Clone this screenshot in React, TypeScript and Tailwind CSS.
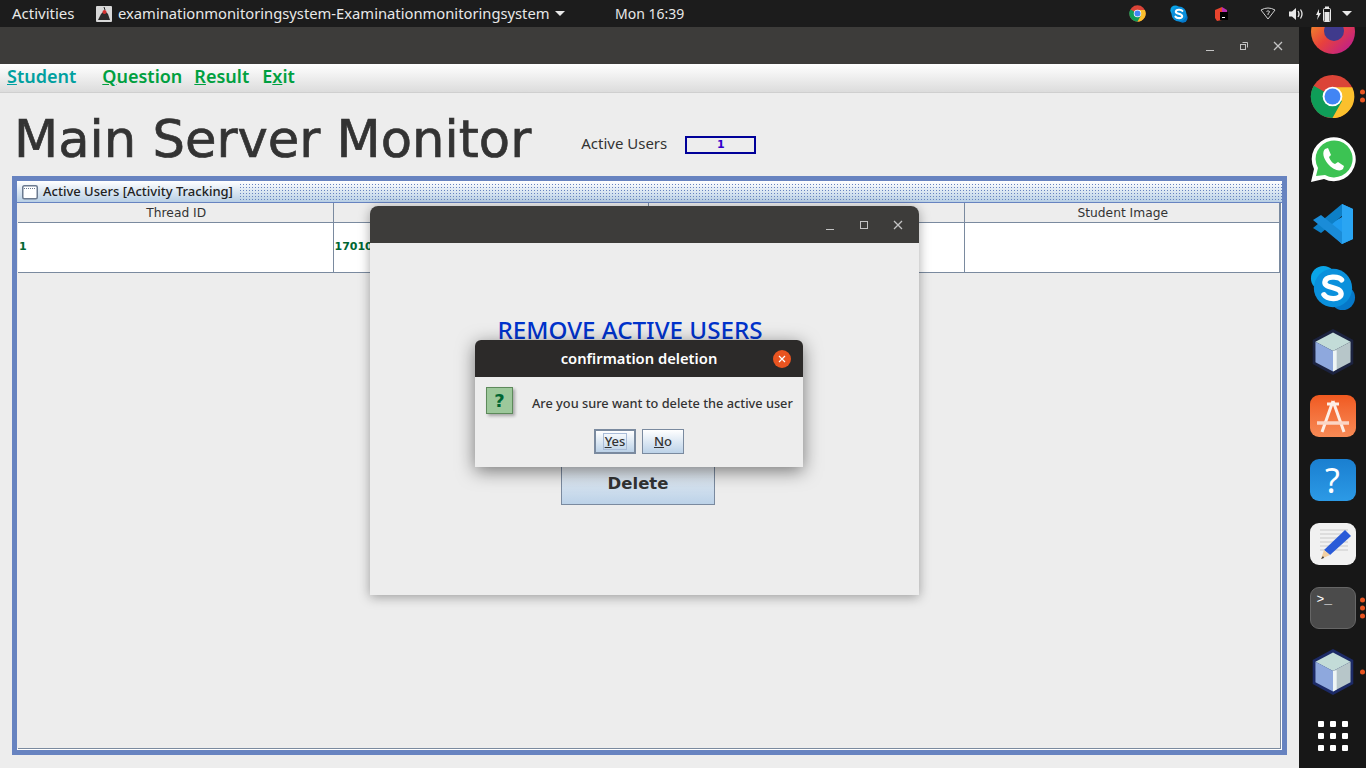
// Ubuntu desktop with the exam monitor window and its two dialogs
const uiFont = "font-['Noto_Sans','Open_Sans',sans-serif]";
const dejaVu = "font-['DejaVu_Sans',sans-serif]";

function ChromeIcon({ size }: { size: number }) {
  return (
    <svg width={size} height={size} viewBox="0 0 48 48">
      <circle cx="24" cy="24" r="23" fill="#db4437" />
      <path d="M24 24 L4 12.5 A23 23 0 0 0 24 47 L36 28z" fill="#0f9d58" />
      <path d="M24 14 H45 A23 23 0 0 1 24 47 L34 29z" fill="#fbc02d" />
      <circle cx="24" cy="24" r="10.5" fill="#fff" />
      <circle cx="24" cy="24" r="8.5" fill="#4285f4" />
    </svg>
  );
}

function SkypeIcon({ size }: { size: number }) {
  return (
    <svg width={size} height={size} viewBox="0 0 48 48">
      <circle cx="14" cy="14" r="13" fill="#0aa5e8" />
      <circle cx="34" cy="34" r="13" fill="#0678c9" />
      <circle cx="24" cy="24" r="20" fill="#0a90dc" />
      <path d="M33 15.5 C30 11.5 16 11 15.5 18 C15 25 32 22 32.500 30 C32.800 36.500 18 36.500 14.500 31" fill="none" stroke="#fff" strokeWidth="5.500" strokeLinecap="round" />
    </svg>
  );
}

function NetbeansIcon({ halo }: { halo: string }) {
  return (
    <svg width="48" height="48" viewBox="0 0 48 52">
      <path d="M24 1 L46 13 V39 L24 51 L2 39 V13z" fill={halo} />
      <path d="M24 5 L43 15 L24 25 L5 15z" fill="#c3dcd8" />
      <path d="M5 15 L24 25 V47 L5 37z" fill="#8ea8dd" />
      <path d="M43 15 L24 25 V47 L43 37z" fill="#b7c6c9" />
      <path d="M24 25 V47 L28 45 V24z" fill="#eef5f5" />
    </svg>
  );
}

function DockIcon({ children, dots = 0 }: { children: React.ReactNode; dots?: number }) {
  return (
    <div className="relative h-16 shrink-0 flex items-center justify-center">
      {children}
      {dots > 0 && (
        <div className="absolute right-[1px] top-1/2 -translate-y-1/2 flex flex-col gap-[3px]">
          {Array.from({ length: dots }).map((_, i) => (
            <span key={i} className="w-[5px] h-[5px] rounded-full bg-[#e95420]" />
          ))}
        </div>
      )}
    </div>
  );
}

function Dock() {
  return (
    <div className="w-[67px] shrink-0 bg-[#171717] flex flex-col justify-end overflow-hidden">
      <DockIcon>
        <svg width="44" height="44" viewBox="0 0 44 44">
          <defs>
            <linearGradient id="fox" x1="0" y1="0" x2="1" y2="1">
              <stop offset="0" stopColor="#f5a623" />
              <stop offset="0.5" stopColor="#e8413c" />
              <stop offset="1" stopColor="#b5179e" />
            </linearGradient>
          </defs>
          <circle cx="22" cy="22" r="22" fill="url(#fox)" />
          <circle cx="23" cy="21" r="10" fill="#3f3a8c" />
        </svg>
      </DockIcon>
      <DockIcon dots={2}>
        <ChromeIcon size={45} />
      </DockIcon>
      <DockIcon>
        <svg width="46" height="46" viewBox="0 0 46 46">
          <path d="M1 45 L4 32 A22 22 0 1 1 14 42z" fill="#fff" />
          <path d="M6 39 L8 31 A18.500 18.500 0 1 1 15 38z" fill="#3cc353" />
          <path d="M15 12 C12 15 13 21 18 27 C23 33 30 35 33 32 L34 29 L28 25 L25 27 C22 26 20 23 19 20 L21 18 L18 11z" fill="#fff" />
        </svg>
      </DockIcon>
      <DockIcon>
        <svg width="42" height="42" viewBox="0 0 42 42">
          <path d="M30 1 L41 6 V36 L30 41 L12 24 L30 14z" fill="#1f9cf0" />
          <path d="M30 1 V41 L41 36 V6z" fill="#2aa5f3" />
          <path d="M30 1 V13 L9 30 L1 25 L30 1z" fill="#0d7fc7" />
          <path d="M1 17 L9 12 L30 29 V41z" fill="#1a8cd8" />
        </svg>
      </DockIcon>
      <DockIcon>
        <SkypeIcon size={46} />
      </DockIcon>
      <DockIcon>
        <NetbeansIcon halo="#1c2340" />
      </DockIcon>
      <DockIcon>
        <div className="w-[46px] h-[42px] rounded-[9px] bg-gradient-to-b from-[#f0591f] to-[#f78a55] flex items-center justify-center">
          <svg width="36" height="36" viewBox="0 0 36 36" fill="none" stroke="#fdeee6" strokeWidth="3">
            <path d="M18 3 L7 34 M18 3 L29 34" />
            <path d="M12 6 H24" />
            <path d="M2 25 H34" stroke="#fbd5c4" strokeWidth="3.500" />
          </svg>
        </div>
      </DockIcon>
      <DockIcon>
        <div className={`w-[46px] h-[42px] rounded-[9px] bg-gradient-to-b from-[#1a7fd0] to-[#2c9ae6] flex items-center justify-center text-white text-[34px] leading-none ${uiFont}`}>?</div>
      </DockIcon>
      <DockIcon>
        <div className="relative w-[46px] h-[42px] rounded-[9px] bg-[#f1f1f1] flex items-center justify-center">
          <svg width="40" height="36" viewBox="0 0 40 36">
            <path d="M7 4 H35 M7 8 H35 M7 12 H35 M7 16 H35 M7 20 H35 M7 24 H35" stroke="#c9c9c9" strokeWidth="1" />
            <path d="M32 4 L38 10 L17 29 L11 24z" fill="#2a5bd8" />
            <path d="M11 24 L17 29 L8 33z" fill="#f1cfa2" />
            <path d="M8 33 L10 30 L11 32z" fill="#333" />
          </svg>
        </div>
      </DockIcon>
      <DockIcon dots={3}>
        <div className="w-[46px] h-[42px] rounded-[9px] bg-[#4b4b4b] border border-[#666] text-white text-[13px] leading-none pl-[6px] pt-[5px] font-['Liberation_Mono',monospace]">
          &gt;_
        </div>
      </DockIcon>
      <DockIcon dots={1}>
        <NetbeansIcon halo="#1c2a66" />
      </DockIcon>
      <DockIcon>
        <div className="grid grid-cols-3 gap-[6px]">
          {Array.from({ length: 9 }).map((_, i) => (
            <span key={i} className="w-[6px] h-[6px] rounded-[1px] bg-white" />
          ))}
        </div>
      </DockIcon>
    </div>
  );
}

function TopBar() {
  return (
    <div className={`h-[27px] shrink-0 bg-[#1c1c1c] text-[#e8e8e8] text-[14.75px] flex items-center ${uiFont}`}>
      <span className="ml-[12px] w-[64px] text-[15px]">Activities</span>
      <svg className="ml-[20px]" width="16" height="16" viewBox="0 0 16 16">
        <rect width="16" height="16" rx="1" fill="#d8d8d8" />
        <path d="M2 14 L5 8 L7 6 H10 L12 8 L14 14z" fill="#2b2b2b" />
        <circle cx="8.500" cy="6" r="2" fill="#d32f2f" />
        <path d="M8 1 L9 4" stroke="#222" />
      </svg>
      <span className="ml-[6px] w-[432px] whitespace-nowrap">examinationmonitoringsystem-Examinationmonitoringsystem</span>
      <span className="ml-[5px] w-0 h-0 border-x-[5px] border-x-transparent border-t-[5px] border-t-[#e8e8e8]" />
      <span className="ml-[50px] text-[14px]">Mon 16:39</span>
      <div className="ml-auto flex items-center">
        <ChromeIcon size={17} />
        <span className="ml-[24px]">
          <SkypeIcon size={18} />
        </span>
        <svg className="ml-[25px]" width="16" height="16" viewBox="0 0 16 16">
          <path d="M2 4 L9 1 V14 L4 15 L2 12z" fill="#e8442e" />
          <path d="M9 1 L14 4 V8 H9z" fill="#b82fb0" />
          <rect x="7" y="6" width="8" height="8" fill="#000" />
          <rect x="9" y="11" width="3" height="1" fill="#fff" />
        </svg>
        <svg className="ml-[31px]" width="16" height="13" viewBox="0 0 16 13" fill="none" stroke="#cfcfcf">
          <path d="M1 3 Q8 -1 15 3 L8 12z" />
          <path d="M6.500 4.500 Q8 3 9.500 4.500 Q9.500 6 8 6.500 V8" />
        </svg>
        <svg className="ml-[13px]" width="15" height="14" viewBox="0 0 15 14">
          <path d="M0 4.500 H3 L7 1 V13 L3 9.500 H0z" fill="#e8e8e8" />
          <path d="M9 4 Q11 7 9 10 M11.500 2.500 Q14.500 7 11.500 11.500" stroke="#e8e8e8" fill="none" strokeWidth="1.300" />
        </svg>
        <svg className="ml-[12px]" width="15" height="16" viewBox="0 0 15 16">
          <path d="M3 3 L0 9 H2 L1 14 L5 7 H3z" fill="#e8e8e8" />
          <rect x="7.500" y="2.500" width="7" height="13" rx="1" fill="none" stroke="#e8e8e8" />
          <rect x="9" y="0.500" width="4" height="2" fill="#e8e8e8" />
          <rect x="8.500" y="6" width="5" height="9" fill="#e8e8e8" />
        </svg>
        <span className="ml-[11px] mr-[14px] w-0 h-0 border-x-[5px] border-x-transparent border-t-[5px] border-t-[#e8e8e8]" />
      </div>
    </div>
  );
}

function WinControls({ restored }: { restored?: boolean }) {
  return (
    <div className="flex items-center gap-[20px] text-[#c4c4c4]">
      <svg width="14" height="14" viewBox="0 0 14 14" stroke="currentColor">
        <path d="M3 11.500 H11" />
      </svg>
      <svg width="14" height="14" viewBox="0 0 14 14" fill="none" stroke="currentColor">
        {restored ? (
          <>
            <rect x="3.500" y="5.500" width="5" height="5" />
            <path d="M5.500 3.500 H10.500 V8.500" />
          </>
        ) : (
          <rect x="3.500" y="3.500" width="7" height="7" />
        )}
      </svg>
      <svg width="14" height="14" viewBox="0 0 14 14" stroke="currentColor" strokeWidth="1.300">
        <path d="M3 3 L11 11 M11 3 L3 11" />
      </svg>
    </div>
  );
}

function Menu({ label, hot, rest, color, className }: { label?: string; hot: string; rest: string; color: string; className: string }) {
  return (
    <span className={`${className} ${color}`}>
      {label}
      <span className="underline">{hot}</span>
      {rest}
    </span>
  );
}

function MainWindow() {
  const headers = ["Thread ID", "", "", "Student Image"];
  const cells = ["1", "17010", "", ""];
  return (
    <div className="flex-1 min-w-0 flex flex-col bg-[#ededed]">
      <div className="h-[37px] shrink-0 bg-[#3d3c3a] flex items-center justify-end pr-[14px]">
        <WinControls restored />
      </div>
      <div className={`h-[29px] shrink-0 bg-gradient-to-b from-white to-[#dcdcdc] border-b border-[#cfcfcf] flex items-center pb-[4px] text-[18px] font-semibold ${uiFont}`}>
        <Menu hot="S" rest="tudent" color="text-[#00a0a0]" className="ml-[7px]" />
        <Menu hot="Q" rest="uestion" color="text-[#00a040]" className="ml-[26px]" />
        <Menu hot="R" rest="esult" color="text-[#00a040]" className="ml-[12px]" />
        <Menu label="E" hot="x" rest="it" color="text-[#00a040]" className="ml-[13px]" />
      </div>
      <div className="h-[83px] shrink-0 flex items-center">
        <h1 className={`ml-[14px] mt-[11px] text-[51.2px] leading-none text-[#333] [-webkit-text-stroke:0.7px_#333] whitespace-nowrap ${dejaVu}`}>Main Server Monitor</h1>
        <span className={`ml-[50px] mt-[17px] text-[15px] text-[#333] ${uiFont}`}>Active Users</span>
        <div className={`ml-[18px] mt-[21px] w-[71px] h-[18px] border-2 border-[#000099] flex items-center justify-center text-[11px] font-bold text-[#3300cc] ${dejaVu}`}>1</div>
      </div>
      <div className="flex-1 mx-[12px] mb-[13px] border-[5px] border-[#6783c0] flex flex-col bg-[#ededed]">
        <div className="h-[22px] shrink-0 bg-gradient-to-b from-white to-[#b8cfe5] flex items-center border-b border-[#6783c0]">
          <svg className="ml-[5px]" width="16" height="16" viewBox="0 0 16 16">
            <rect x="0.750" y="1.750" width="14.500" height="13" rx="1.500" fill="#fff" stroke="#6b7a8f" strokeWidth="1.500" />
            <path d="M2 4.500 H14" stroke="#6b7a8f" strokeDasharray="1 1" />
          </svg>
          <span className={`ml-[5px] text-[13px] font-medium text-[#222] ${uiFont}`}>Active Users [Activity Tracking]</span>
          <div className="ml-[6px] flex-1 h-[17px] bg-[radial-gradient(#6783c0_0.8px,transparent_0.9px)] bg-[length:3px_3px]" />
        </div>
        <div className="flex-1 min-h-0 flex flex-col border-r border-b border-white">
          <div className="flex-1 min-h-0 ml-[1px] border-r border-b border-[#7a8a9f]">
            <div className="grid grid-cols-4 border-b border-[#7a8a9f]">
              {headers.map((h, i) => (
                <div key={i} className={`h-[20px] pl-[2px] pt-[1px] flex items-center justify-center text-[12.25px] text-[#333] border-b border-r border-[#7a8a9f] ${dejaVu}`}>
                  {h}
                </div>
              ))}
              {cells.map((c, i) => (
                <div key={i} className={`h-[49px] bg-white flex items-center pl-[1px] text-[11px] font-bold text-[#006633] border-r border-[#7a8a9f] ${dejaVu}`}>
                  {c}
                </div>
              ))}
            </div>
          </div>
        </div>
      </div>
    </div>
  );
}

function RemoveDialog() {
  return (
    <div className="absolute left-[370px] top-[206px] w-[549px] h-[389px] bg-[#ededed] rounded-t-[8px] shadow-[0_2px_12px_rgba(0,0,0,0.35)] flex flex-col">
      <div className="h-[37px] shrink-0 bg-[#3d3c3a] rounded-t-[8px] flex items-center justify-end pr-[14px]">
        <WinControls />
      </div>
      <div className={`mt-[75px] text-center pr-[29px] text-[24.2px] font-medium text-[#0033cc] leading-none ${uiFont}`}>REMOVE ACTIVE USERS</div>
      <button className={`absolute left-[191px] top-[254px] w-[154px] h-[45px] pt-[3px] border border-[#7a8a9f] bg-gradient-to-b from-[#f4f6f8] to-[#bcd2e8] text-[16.5px] font-bold text-[#333] ${dejaVu}`}>
        Delete
      </button>
    </div>
  );
}

function ConfirmDialog() {
  return (
    <div className={`absolute left-[475px] top-[340px] w-[328px] h-[127px] bg-[#ededed] rounded-t-[6px] shadow-[0_4px_18px_rgba(0,0,0,0.5)] flex flex-col ${uiFont}`}>
      <div className="h-[37px] shrink-0 bg-[#2c2a29] rounded-t-[6px] flex items-center relative">
        <span className="flex-1 text-center text-white text-[14.75px] font-semibold">confirmation deletion</span>
        <span className="absolute right-[12px] top-[10px] w-[18px] h-[18px] rounded-full bg-[#e95420] flex items-center justify-center">
          <svg width="10" height="10" viewBox="0 0 10 10" stroke="#fff" strokeWidth="1.200">
            <path d="M2 2 L8 8 M8 2 L2 8" />
          </svg>
        </span>
      </div>
      <div className="h-[42px] flex items-start pt-[10px]">
        <div className={`ml-[11px] w-[27px] h-[27px] bg-[#9dc89b] border border-[#5d8a5b] shadow-[2px_2px_3px_rgba(0,0,0,0.3)] flex items-center justify-center text-[18px] font-bold text-[#063] leading-none ${dejaVu}`}>?</div>
        <span className="ml-[19px] mt-[7px] text-[12.75px] font-medium text-[#333] whitespace-nowrap">Are you sure want to delete the active user</span>
      </div>
      <div className="mt-[10px] flex justify-center gap-[6px] text-[13px] font-medium text-[#333]">
        <button className="w-[42px] h-[25px] border-2 border-[#7a8a9f] bg-gradient-to-b from-white to-[#bcd2e8] flex items-center justify-center">
          <span className="border border-[#a9bcd8] leading-[15px] px-[1px]">
            <span className="underline">Y</span>es
          </span>
        </button>
        <button className="w-[42px] h-[25px] border border-[#7a8a9f] bg-gradient-to-b from-white to-[#bcd2e8]">
          <span className="underline">N</span>o
        </button>
      </div>
    </div>
  );
}

export default function App() {
  return (
    <div className="relative w-[1366px] h-[768px] overflow-hidden flex flex-col">
      <TopBar />
      <div className="flex-1 min-h-0 flex">
        <MainWindow />
        <Dock />
      </div>
      <RemoveDialog />
      <ConfirmDialog />
    </div>
  );
}
